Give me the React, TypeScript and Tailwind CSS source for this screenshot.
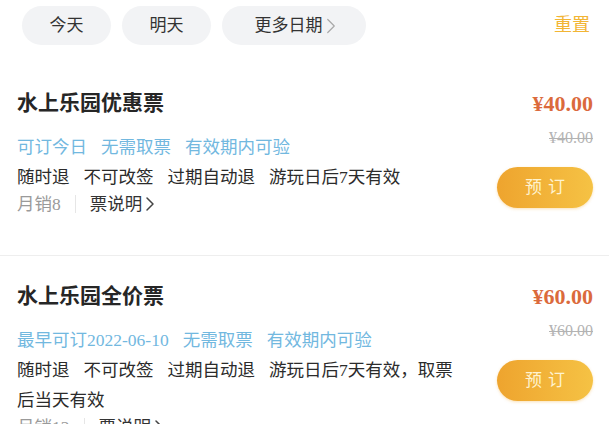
import React from "react";
import { ChevronRight } from "lucide-react";

type Ticket = {
  name: string;
  tags: string[];
  rules: string[];
  price: string;
  sold: string;
};

const tickets: Ticket[] = [
  {
    name: "水上乐园优惠票",
    tags: ["可订今日", "无需取票", "有效期内可验"],
    rules: ["随时退", "不可改签", "过期自动退", "游玩日后7天有效"],
    price: "40.00",
    sold: "月销8",
  },
  {
    name: "水上乐园全价票",
    tags: ["最早可订2022-06-10", "无需取票", "有效期内可验"],
    rules: ["随时退", "不可改签", "过期自动退", "游玩日后7天有效，取票后当天有效"],
    price: "60.00",
    sold: "月销12",
  },
];

function TicketCard({ t }: { t: Ticket }) {
  return (
    <div className="flex gap-[35px] pl-[17px] pr-[16px] pt-[24px] pb-[39px] border-b border-[#eeeeee]">
      <div className="flex-1 min-w-0">
        <h2 className="text-[21px] leading-[28px] font-bold text-[#262626] font-['Noto_Sans_CJK_SC',sans-serif]">
          {t.name}
        </h2>
        <div className="mt-[17px] text-[17.5px] leading-[30px] text-[#72b8df]">
          {t.tags.map((tag, i) => (
            <span key={i} className="mr-[14px]">
              {tag}
            </span>
          ))}
        </div>
        <div className="text-[17.5px] leading-[30px] text-[#2b2b2b]">
          {t.rules.map((r, i) => (
            <span key={i} className="mr-[14px]">
              {r}
            </span>
          ))}
        </div>
        <div className="flex items-center text-[17.5px] leading-[24px]">
          <span className="text-[#9a9a9a]">{t.sold}</span>
          <span className="mx-[14px] h-[18px] w-px bg-[#e6e6e6]" />
          <span className="text-[#333333]">票说明</span>
          <ChevronRight className="-ml-[4px] h-[24px] w-[24px] text-[#444444]" strokeWidth={1.5} />
        </div>
      </div>
      <div className="w-[96px] shrink-0 flex flex-col items-end">
        <div className="mt-[3px] text-[22px] leading-[28px] font-bold text-[#db6a3c]">
          ¥{t.price}
        </div>
        <div className="mt-[10px] text-[16px] leading-[20px] text-[#b3b3b3] line-through">
          ¥{t.price}
        </div>
        <button className="mt-[19px] h-[41px] w-[96px] rounded-full bg-gradient-to-r from-[#eea42e] to-[#f5c244] text-[17px] tracking-[6px] pl-[6px] text-[#fff3cf] shadow-[0_1px_3px_rgba(240,170,50,0.35)]">
          预订
        </button>
      </div>
    </div>
  );
}

export default function App() {
  return (
    <div className="w-[609px] h-[424px] overflow-hidden bg-white font-['Liberation_Serif','Noto_Sans_CJK_SC',serif]">
      <div className="h-[63px] flex items-start pt-[6px] pl-[22px] pr-[19px]">
        <div className="flex gap-[11px]">
          <button className="h-[39px] w-[89px] rounded-full bg-[#f2f3f5] text-[17px] text-[#333333]">
            今天
          </button>
          <button className="h-[39px] w-[89px] rounded-full bg-[#f2f3f5] text-[17px] text-[#333333]">
            明天
          </button>
          <button className="h-[39px] w-[144px] rounded-full bg-[#f2f3f5] text-[17px] text-[#333333] flex items-center justify-center pl-[10px]">
            更多日期
            <ChevronRight className="-ml-[5px] h-[26px] w-[26px] text-[#a8a8a8]" strokeWidth={1.1} />
          </button>
        </div>
        <div className="ml-auto mt-[7px] text-[18px] leading-[24px] text-[#f2b534]">重置</div>
      </div>
      {tickets.map((t, i) => (
        <TicketCard key={i} t={t} />
      ))}
    </div>
  );
}
